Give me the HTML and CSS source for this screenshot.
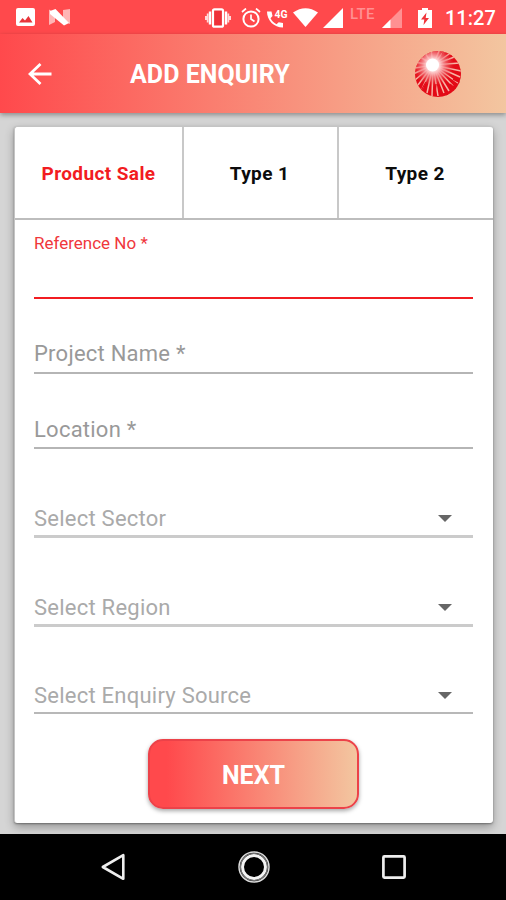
FILE: index.html
```html
<!DOCTYPE html>
<html lang="en">
<head>
<meta charset="utf-8">
<title>Add Enquiry</title>
<link rel="stylesheet" href="styles.css">
</head>
<body>
<div class="status">
  <div class="status-left">
    <svg width="19" height="18" viewBox="0 0 19 18"><rect width="19" height="18" rx="2" fill="#fff"/><path d="M3 14.500 6.500 10l2.500 2.500 3.500-4.500L16.500 14.500z" fill="#e8343a"/></svg>
    <svg width="21" height="18" viewBox="0 0 21 18"><path d="M0 1.500 6 5v9L0 17zM14 2l7-1v15l-7-3z" fill="#ffb5b5"/><path d="M1 3 6.500 1 20 15l-5 2.500L1 6z" fill="#fff"/></svg>
  </div>
  <div class="status-right">
    <svg class="vibrate" width="26" height="20" viewBox="0 0 26 20"><rect x="8" y="1.300" width="10" height="17.400" rx="1.500" fill="#ef3038" stroke="#fff" stroke-width="2.200"/><path d="M5 3.500v13M21 3.500v13" stroke="#fff" stroke-width="2.400"/><path d="M2.700 5.500v9M23.300 5.500v9M.9 8v4M25.100 8v4" stroke="#ffdada" stroke-width="1.800"/></svg>
    <svg class="alarm" width="20" height="21" viewBox="0 0 20 21"><circle cx="10" cy="11" r="7.600" fill="none" stroke="#fff" stroke-width="2"/><path d="M10 6.500V11l3.500 2.500M1 4l4-3.500M19 4l-4-3.500" fill="none" stroke="#fff" stroke-width="1.700"/></svg>
    <svg class="call" width="21" height="20" viewBox="0 0 21 20"><path d="M0 3.500h4.500l1 4.500-2 2.200c1.500 2.800 3.200 4.500 6 6l2.200-2 4.300.8v4.500C7 19.500 0 12.500 0 3.500z" fill="#fff"/><text x="7.500" y="9.500" class="net" textLength="13" lengthAdjust="spacingAndGlyphs">4G</text></svg>
    <svg class="wifi" width="25" height="19" viewBox="0 0 25 19"><path d="M0 4.500Q12.500-4 25 4.500L12.500 19z" fill="#fff"/></svg>
    <svg class="signal" width="20" height="20" viewBox="0 0 20 20"><path d="M20 0v20H0z" fill="#fff"/></svg>
    <span class="lte">LTE</span>
    <svg class="signal2" width="20" height="20" viewBox="0 0 20 20"><path d="M20 0v20H0z" fill="#ff9092"/><path d="M8.500 11.500V20H0z" fill="#fff"/></svg>
    <svg class="battery" width="14" height="20" viewBox="0 0 14 20"><path d="M0 2h4V0h6v2h4v18H0z" fill="#fff"/><path d="M8.500 4.500 3 11.500h3.300L5.500 17l5.500-7H7.700z" fill="#f0343a"/></svg>
    <span class="time">11:27</span>
  </div>
</div>
<header class="bar">
  <svg class="back" width="24" height="24" viewBox="0 0 24 24"><path d="M12.500 2 2 12l10.500 10M2.500 12H23.500" fill="none" stroke="#fff" stroke-width="2.800"/></svg>
  <h1>ADD ENQUIRY</h1>
  <svg class="logo" width="48" height="48" viewBox="0 0 48 48">
    <defs>
      <radialGradient id="glow" cx="19" cy="15" r="21" gradientUnits="userSpaceOnUse"><stop offset="0" stop-color="#fff"/><stop offset=".28" stop-color="#ffdede"/><stop offset=".55" stop-color="#f58c90" stop-opacity=".8"/><stop offset="1" stop-color="#ec3c43" stop-opacity="0"/></radialGradient>
      <clipPath id="disc"><circle cx="24" cy="24" r="23"/></clipPath>
    </defs>
    <g clip-path="url(#disc)">
      <rect width="48" height="48" fill="#e30b17"/>
      <path d="M19 15-1 12M19 15 1 18M19 15-1 24M19 15 1 30M19 15 4 35M19 15 8 39M19 15 13 43M19 15l-1 31M19 15l5 31M19 15l11 28M19 15l16 26M19 15l20 21M19 15l25 18M19 15l27 12M19 15l28 6M19 15l27-2M19 15 43 6M19 15 38 2M19 15 32-1M19 15 26-1M19 15 17-1M19 15 9 0M19 15 3 5" stroke="#f7b3a5" stroke-width="1.500"/>
      <path d="m31 41 3 5M36 34l7 6M22 34l-1 9M39 29l8 4M12 32l-4 7M27 8l3-8M34 8l7-5" stroke="#e30b17" stroke-width="1.500"/>
      <circle cx="19" cy="15" r="21" fill="url(#glow)"/>
      <circle cx="18.500" cy="15" r="6.500" fill="#fff"/>
    </g>
  </svg>
</header>
<main class="page">
  <section class="card">
    <nav class="tabs">
      <div class="tab active"><span>Product Sale</span></div>
      <div class="tab"><span>Type 1</span></div>
      <div class="tab"><span>Type 2</span></div>
    </nav>
    <form class="form">
      <div class="field focused"><label>Reference No *</label></div>
      <div class="field project"><label>Project Name *</label></div>
      <div class="field"><label>Location *</label></div>
      <div class="field select"><label>Select Sector</label><i class="caret"></i></div>
      <div class="field select"><label>Select Region</label><i class="caret"></i></div>
      <div class="field select last"><label>Select Enquiry Source</label><i class="caret"></i></div>
      <button type="button" class="next"><span>NEXT</span></button>
    </form>
  </section>
</main>
<footer class="nav">
  <svg width="26" height="30" viewBox="0 0 26 30"><path d="M23.300 3.200v23.600L2.800 15z" fill="none" stroke="#eee" stroke-width="2.600" stroke-linejoin="round"/></svg>
  <svg width="34" height="34" viewBox="0 0 34 34"><circle cx="17" cy="17" r="15" fill="none" stroke="#ddd" stroke-width="1.500"/><circle cx="17" cy="17" r="11.500" fill="none" stroke="#f4f4f4" stroke-width="3"/><circle cx="17" cy="17" r="13.500" fill="none" stroke="#777" stroke-width="1.200"/></svg>
  <svg width="26" height="26" viewBox="0 0 26 26"><rect x="2.400" y="2.400" width="21.200" height="21.200" rx="1" fill="none" stroke="#eee" stroke-width="2.700"/></svg>
</footer>
</body>
</html>
```
FILE: styles.css
```css
* { box-sizing: border-box; }
body { margin: 0; width: 506px; height: 900px; display: flex; flex-direction: column; font-family: Roboto, sans-serif; background: #d5d5d5; overflow: hidden; }
svg { display: block; flex: none; }
.status { height: 34px; flex: none; background: #ff494c; display: flex; justify-content: space-between; padding: 8px 10px 0 16px; color: #fff; }
.status-left { display: flex; gap: 14px; }
.status-right { display: flex; align-items: flex-start; }
.alarm { margin-left: 10px; }
.call { margin-left: 6px; }
.wifi { margin-left: 5px; }
.signal { margin-left: 5px; }
.net { font: 700 10px Roboto, sans-serif; fill: #fff; }
.lte { width: 26px; margin-left: 7px; font-size: 15px; line-height: 12px; letter-spacing: .3px; color: #ff9092; font-weight: 500; }
.signal2 { margin-left: 6px; }
.battery { margin-left: 16px; }
.time { width: 51px; margin-left: 13px; font-size: 20px; line-height: 20px; font-weight: 500; white-space: nowrap; }
.bar { position: relative; z-index: 1; height: 79px; flex: none; display: flex; align-items: center; padding: 0 44px 0 28px; background: linear-gradient(90deg, #ff494c, #f3c6a0); box-shadow: 0 2px 5px rgba(0, 0, 0, .35); }
.bar h1 { margin: 3px 0 0 78px; flex: 1; font-size: 25px; line-height: 30px; letter-spacing: .05px; font-weight: 700; color: #fff; white-space: nowrap; }
.page { flex: 1; padding: 13px 13px 10px 14px; }
.card { height: 697px; background: #fff; border: solid #c4c4c4; border-width: 1px 0 0 1px; border-radius: 3px; box-shadow: 0 1px 2px rgba(0, 0, 0, .35), 0 4px 10px rgba(0, 0, 0, .3); }
.tabs { display: grid; grid-template-columns: 167px 155px 1fr; height: 93px; border-bottom: 2px solid #bdbdbd; }
.tab { display: flex; align-items: center; justify-content: center; padding-top: 2px; font-size: 19px; letter-spacing: .4px; font-weight: 700; color: #0c0c0c; }
.tab + .tab { border-left: 2px solid #c8c8c8; padding-right: 2px; }
.tab.active { color: #f21c21; }
.form { padding: 0 20px 0 19px; display: flex; flex-direction: column; }
.field { display: flex; align-items: flex-end; justify-content: space-between; border-bottom: 2px solid #b5b5b5; height: 75px; padding-bottom: 3px; color: #999; font-size: 22px; line-height: 28px; letter-spacing: .24px; }
.field.focused { height: 79px; align-items: flex-start; padding-top: 9px; border-color: #f21c21; color: #f0373c; font-size: 17px; letter-spacing: 0; }
.field.project { padding-bottom: 4px; }
.field.select { height: 89px; padding-bottom: 2px; border-bottom: 3px solid #cbcbcb; color: #aaa; }
.field.select.last { height: 87px; border-bottom: 2px solid #b8b8b8; }
.caret { border: 7px solid transparent; border-top: 7px solid #666; border-bottom: 0; margin: 0 21px 11px 0; }
.next { width: 211px; height: 70px; margin: 25px 0 0 114px; border: 2px solid #ec4249; border-radius: 15px; background: linear-gradient(90deg, #ff494c 8%, #f3c6a0); box-shadow: 0 2px 4px rgba(0, 0, 0, .35); color: #fff; font: 700 25px Roboto, sans-serif; padding: 3px 0 0; }
.nav { height: 66px; flex: none; background: #000; display: flex; justify-content: space-between; align-items: center; padding: 0 99px 0 100px; }
```
